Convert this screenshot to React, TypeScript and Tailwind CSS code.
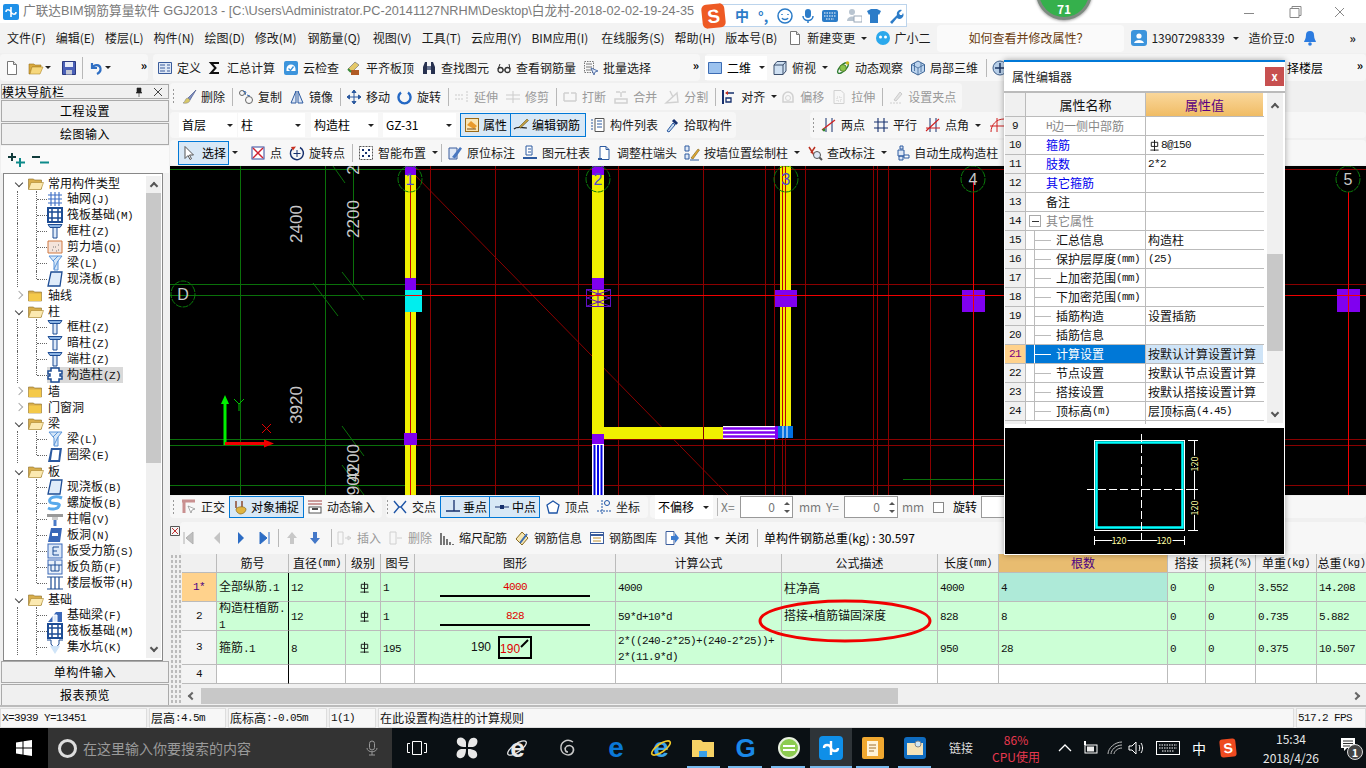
import type { ReactNode } from "react";

const icons: Record<string, ReactNode> = {
  doc: <><path d="M3.5 1.5h6l3 3v10h-9z" fill="#fff" stroke="#777" /><path d="M9.5 1.5v3h3" fill="#ddd" stroke="#777" /></>,
  open: <><path d="M1 4h5l1 1h6v2H4l-2 7H1z" fill="#d9a93d" stroke="#9a7420" strokeWidth=".6" /><path d="M4 7h11l-3 7H2z" fill="#f6d77c" stroke="#b48a2a" strokeWidth=".6" /></>,
  save: <><path d="M1.5 1.5h13v13h-13z" fill="#4a60b8" stroke="#2b3a80" /><path d="M4 2h8v5H4z" fill="#e8ecf8" /><path d="M5 10h6v4.5H5z" fill="#c4c8d4" /></>,
  undo: <path d="M4 3v5h5M4.5 8C6 4 12 4 12.5 8.500 12.800 11 11 13 9 14" fill="none" stroke="#2f6fc4" strokeWidth="2.200" />,
  def: <><path d="M1.500 2.500h13v11h-13z" fill="#dfe8f6" stroke="#3a5c9c" /><path d="M3 5h5M3 8h5M3 11h5M10 5h3M10 8h3M10 11h3" stroke="#3a5c9c" /></>,
  sigma: <path d="M12 3H4l4.500 5L4 13h8" fill="none" stroke="#111" strokeWidth="2" />,
  cloud: <><rect x="1" y="1" width="14" height="14" rx="2" fill="#3c94dc" /><path d="M3.500 9a4.500 4.500 0 1 1 9 0v2h-9z" fill="#fff" /><path d="M5.500 8.500l2 2 3-4" fill="none" stroke="#3c94dc" strokeWidth="1.300" /></>,
  level: <><path d="M2 9l7-7 4 3-7 7z" fill="#e4c868" stroke="#777" strokeWidth=".7" /><path d="M5 10h8v5H5z" fill="#b05a24" /><path d="M2 9l3 3" stroke="#3a8a3a" strokeWidth="2" /></>,
  binoc: <><path d="M2 14V7l2-5h2v12zM10 14V2h2l2 5v7z" fill="#27314f" /><path d="M6 6h4v4H6z" fill="#6b7692" /></>,
  glasses: <><circle cx="4.500" cy="10" r="2.500" fill="none" stroke="#333" strokeWidth="1.300" /><circle cx="11.500" cy="10" r="2.500" fill="none" stroke="#333" strokeWidth="1.300" /><path d="M7 10h2M2 9l2-5M14 9l-1-5" stroke="#333" /></>,
  batch: <><path d="M1.500 1.500h9v11h-9z" fill="none" stroke="#777" strokeDasharray="1.500 1" /><path d="M3 4h6M3 7h6M3 10h6" stroke="#777" /><path d="M8 8l7 3-3 1-1 3z" fill="#dfe8f6" stroke="#3a5c9c" strokeWidth=".8" /></>,
  view2d: <path d="M1.500 2.500h13v11h-13z" fill="#9cc2ee" stroke="#3c6cb4" />,
  top: <><path d="M2 5l3-3.500h9V11l-3 3.500H2z" fill="#cfe0f2" stroke="#3b4e6c" /><path d="M2 5h9v9.500M11 5l3-3.500" fill="none" stroke="#3b4e6c" /></>,
  orbit: <><ellipse cx="8" cy="8" rx="7" ry="3" transform="rotate(-45 8 8)" fill="none" stroke="#2e7d32" strokeWidth="1.400" /><circle cx="8" cy="8" r="3.400" fill="#8bc34a" stroke="#33691e" strokeWidth=".7" /><circle cx="12.500" cy="3" r="1.800" fill="#c8b820" /></>,
  cube: <><path d="M8 1l6.500 3.500v7L8 15l-6.500-3.500v-7z" fill="#bcd4ee" stroke="#3c6496" /><path d="M1.500 4.500L8 8l6.500-3.500M8 8v7M4.500 3v8M11 3v9" fill="none" stroke="#3c6496" strokeWidth=".8" /></>,
  pan: <><circle cx="8" cy="8" r="7" fill="#b8cfe8" stroke="#41608a" /><path d="M8 3v10M3 8h10" stroke="#1d3763" strokeWidth="1.500" /></>,
  brush: <><path d="M15 1L7 9l2 2z" fill="#8090c0" stroke="#3c4c84" strokeWidth=".6" /><path d="M7 9c-3 0-2 3-5 5 4 1 7-1 7-3z" fill="#d8c868" stroke="#888" strokeWidth=".6" /></>,
  copy: <><circle cx="4" cy="4" r="2.500" fill="none" stroke="#666" /><circle cx="11" cy="11" r="3.500" fill="none" stroke="#666" /><path d="M5 2l3 1-1 3M9 6l3 1" fill="none" stroke="#3a6cb0" /></>,
  mirror: <><path d="M7 2L2 14h5zM9 2l5 12H9z" fill="#dfe8f6" stroke="#2c5aa0" /></>,
  move: <path d="M8 1v14M1 8h14M8 1L6 3.500h4zM8 15l-2-2.500h4zM1 8l2.500-2v4zM15 8l-2.500-2v4z" fill="#2c5aa0" stroke="#2c5aa0" />,
  rotate: <path d="M4 3.500a6 6 0 1 0 7 0" fill="none" stroke="#2468c4" strokeWidth="2.400" />,
  extend: <path d="M1 6h9M1 10h9M13 2v12" fill="none" stroke="#b0b0b0" strokeDasharray="2 1" />,
  trim: <path d="M1 6h14M1 10h14M8 2v12" fill="none" stroke="#b0b0b0" />,
  brk: <path d="M2 4h5M9 4h5M2 12h12M2 4v8M14 4v8" fill="none" stroke="#b8b8b8" strokeWidth="1.500" />,
  merge: <path d="M3 3h4M9 3h4M2 10h12v4H2zM8 3v5" fill="none" stroke="#b8b8b8" strokeWidth="1.500" />,
  split: <path d="M2 14L13 4l1 9zM6 2l3 6" fill="none" stroke="#b8b8b8" strokeWidth="1.400" />,
  align: <><path d="M2 1v14" stroke="#16306e" strokeWidth="2" /><path d="M5 4h8M5 9h5v4H5z" fill="none" stroke="#16306e" strokeWidth="1.300" /><path d="M4 4l3-2v4z" fill="#c83020" /></>,
  offset: <><path d="M3 13V8a5 5 0 0 1 10 0v5z" fill="none" stroke="#b8b8b8" strokeWidth="1.500" /><circle cx="8" cy="9" r="2.500" fill="none" stroke="#c0c0c0" /></>,
  stretch: <><path d="M3 1.500h7l3 3v10H3z" fill="none" stroke="#b8b8b8" /><path d="M6 8h4v4H6z" fill="none" stroke="#b8b8b8" strokeDasharray="1 1" /></>,
  handle: <><path d="M2 14h11" stroke="#b8b8b8" strokeDasharray="2 1" /><path d="M6 11l6-8 2 2-6 7z" fill="#d8d8d8" stroke="#b0b0b0" /></>,
  prop: <><rect x="1.500" y="1.500" width="13" height="13" fill="#fbe6b4" stroke="#9a6a18" /><path d="M3 8l4-4 6 5-3 3z" fill="#e99a2c" /><path d="M3 12h9" stroke="#7a4a10" /></>,
  edit: <><path d="M1 12c3-3 8-1 13-1" fill="none" stroke="#222" strokeWidth="1.200" /><path d="M6 10l8-8 1.500 1.500-8 7.500z" fill="#c4a040" stroke="#665520" strokeWidth=".6" /></>,
  list: <><path d="M5 1.500h9v13H5z" fill="#fff" stroke="#555" /><path d="M1 3h2M1 6h2M1 9h2M1 12h2M7 4h5M7 7h5M7 10h5" stroke="#2c5aa0" /></>,
  pick: <><path d="M3 14L9 6l2 2-6 7z" fill="#c8dcf0" stroke="#2c5aa0" /><path d="M9 3l4 4" stroke="#16306e" strokeWidth="3" /></>,
  two: <><path d="M5 1v14M11 1v14" stroke="#16306e" /><path d="M1 13L14 3" stroke="#d02020" strokeWidth="1.300" /><circle cx="3" cy="13" r="1.400" fill="#2e8b2e" /></>,
  par: <path d="M1 5h14M1 11h14M5 1v14M11 1v14" stroke="#16306e" strokeWidth="1.100" />,
  ang: <><path d="M5 1v14M11 1v14" stroke="#16306e" /><path d="M1 14L14 2M1 11h14" stroke="#d02020" strokeWidth="1.100" /></>,
  arc: <><path d="M2 15C2 8 7 2 15 2M1 9h14M8 1v14" fill="none" stroke="#d02020" /></>,
  arrow: <path d="M4 1.500v12l3-3 2 4 1.500-.8-2-3.700h4z" fill="#fff" stroke="#555" />,
  pt: <><rect x="2" y="2" width="12" height="12" fill="#fff" stroke="#34489c" /><path d="M3 3l10 10M13 3L3 13" stroke="#d02030" strokeWidth="1.400" /></>,
  rotpt: <><path d="M11 2.500a6.500 6.500 0 1 1-8 1.500" fill="none" stroke="#16306e" strokeWidth="1.500" /><path d="M8 5v7M4.500 8.500h7" stroke="#16306e" /><path d="M2 2l5-.5-3 4z" fill="#c83020" /></>,
  smart: <><rect x="1.500" y="1.500" width="13" height="13" fill="#fff" stroke="#555" strokeDasharray="2 1" /><path d="M4 4h2v2H4zM10 4h2v2h-2zM4 10h2v2H4zM10 10h2v2h-2zM7 7h2v2H7z" fill="#16306e" /></>,
  orig: <><path d="M2 3h8v11H2z" fill="#dfe8f6" stroke="#3a5c9c" /><path d="M5 12l8-10 2 1.500-7 10z" fill="#4a78c0" /></>,
  table: <><path d="M4 1h6v9H4z" fill="#fff" stroke="#2c5aa0" /><path d="M1 12h14v2H1z" fill="#2c5aa0" /><path d="M6 4h3M6 7h3" stroke="#2c5aa0" /></>,
  adj: <><path d="M3 1.500h6l3 3v10H3z" fill="#fff" stroke="#2c5aa0" /><path d="M9 1.500v3h3" fill="none" stroke="#2c5aa0" /><path d="M1 14h4" stroke="#2c5aa0" strokeWidth="2" /></>,
  draw: <><path d="M1 1h4v5H1zM1 9h4v5H1z" fill="#dfe8f6" stroke="#2c5aa0" /><path d="M7 13l7-9 1.500 1L9 14z" fill="#e0a830" stroke="#776020" strokeWidth=".6" /><path d="M6 15h9" stroke="#2c5aa0" /></>,
  check: <><path d="M2 2l5 8M8 2L4 8" stroke="#bb3020" strokeWidth="1.500" /><circle cx="10" cy="10" r="3.500" fill="#dfe8f6" stroke="#555" /><path d="M12.500 12.500L15 15" stroke="#555" strokeWidth="2" /></>,
  auto: <><path d="M6 1h3v3H6zM4 5h6v6H4zM5 11h4v4H5z" fill="#dfe8f6" stroke="#2c5aa0" /><path d="M10 10h5v3h-5z" fill="#fff" stroke="#2c5aa0" /></>,
  ortho: <><path d="M1 2h13M3 2v12" stroke="#c99090" strokeWidth="3" /><path d="M7 7l7 3-3 1-1 3z" fill="#fff" stroke="#888" strokeWidth=".7" /></>,
  snap: <><path d="M3 2v7M9 2v7" stroke="#8a4a30" strokeWidth="1.500" /><path d="M3 10c2-3 9-3 10 0 0 3-3 5-6 5-3-1-4-3-4-5z" fill="#e0b440" stroke="#8a6a20" strokeWidth=".7" /></>,
  dyn: <><path d="M1 2h14M1 5h14" stroke="#a04040" /><rect x="2" y="8" width="12" height="6" fill="#fff" stroke="#555" /><path d="M5 10h6" stroke="#111" strokeWidth="1.500" /></>,
  cross: <path d="M2 2l5 6-5 6M14 2L9 8l5 6M7 8h2" fill="none" stroke="#1d54a6" strokeWidth="1.400" />,
  perp: <path d="M1 12h14M9 1v11" stroke="#16306e" strokeWidth="1.300" />,
  mid: <><path d="M1 8h14" stroke="#16306e" /><rect x="6" y="6" width="4" height="4" fill="#16306e" /></>,
  apex: <path d="M8 2l6 4-2 8H4L2 6z" fill="#fff" stroke="#1d54a6" strokeWidth="1.300" />,
  coord: <><path d="M6 1v14M1 12h14" stroke="#1d54a6" strokeDasharray="2 1" /><circle cx="11" cy="4" r="2.500" fill="none" stroke="#1d54a6" /></>,
  first: <path d="M4 2v12M13 2L6 8l7 6z" fill="#c0c0c0" stroke="#b0b0b0" />,
  prev: <path d="M11 2L5 8l6 6z" fill="#c4c4c4" />,
  next: <path d="M5 2l6 6-6 6z" fill="#2c6cc4" />,
  last: <path d="M12 2v12M3 2l7 6-7 6z" fill="#2c6cc4" stroke="#2c6cc4" />,
  up: <path d="M8 2l5 6h-3v6H6V8H3z" fill="#c8c8c8" />,
  down: <path d="M8 14l5-6h-3V2H6v6H3z" fill="#4478c8" />,
  ins: <path d="M1 2h5v12H1zM8 8h6M14 8l-3-2v4z" fill="none" stroke="#b8b8b8" />,
  del: <path d="M2 2h6v12H2zM9 8h5" fill="none" stroke="#b8b8b8" />,
  ruler: <path d="M2 15V3M5 15V6M8 15V9M11 15v-3M14 15v-1" stroke="#333" strokeWidth="1.300" />,
  info: <><path d="M2 9l6-7 6 6-6 7z" fill="#f6e6b0" stroke="#8a6a20" /><path d="M6 13l7-9" stroke="#3c6cb0" strokeWidth="2" /></>,
  lib: <><rect x="1.500" y="2.500" width="13" height="11" fill="#fff" stroke="#3a5c9c" /><path d="M2 5h12" stroke="#3a5c9c" strokeWidth="2" /><path d="M4 8h8M4 11h8" stroke="#c09030" /></>,
  other: <><path d="M2 1.500h8v13H2z" fill="#fff" stroke="#3a5c9c" /><path d="M7 6h4V3l4 5-4 5v-3H7z" fill="#3c7cd0" /></>,
  axis: <path d="M1 4h14M1 8h14M1 12h14M4 1v14M8 1v14M12 1v14" stroke="#3a6cc4" strokeWidth="1.100" />,
  raft: <><path d="M1 1h14v14H1z" fill="#fff" stroke="#1d4c94" strokeWidth="2" /><path d="M5 2v12M11 2v12M2 5h12M2 11h12" stroke="#1d4c94" strokeWidth="1.500" /></>,
  col: <><path d="M1 1.500h14l-2 3H3z" fill="#8cb4e4" stroke="#1d4c94" /><path d="M6 4.500h4V15H6z" fill="#dce8f8" stroke="#1d4c94" /></>,
  wall: <><path d="M1 2h14v12H1z" fill="#f4e4dc" stroke="#d07840" /><path d="M5 11h1M8 8h1M11 11h1M9 12h1M6 8h1M11 6h1" stroke="#777" /></>,
  beam: <><path d="M2 1h13l-4 5v9H7V7z" fill="#d4e6f8" stroke="#5a94d8" /><path d="M6 6l5-5M11 6L7 14" stroke="#5a94d8" /></>,
  slab: <path d="M4 1h11l-2 14H1z" fill="#e0ecfa" stroke="#1d4c94" strokeWidth="1.300" />,
  gzz: <path d="M4 1h8v3h3v3h-2v2h2v3h-3v3H4v-3H1V9h2V7H1V4h3z" fill="#fff" stroke="#1d4c94" strokeWidth="1.500" />,
  ring: <><path d="M4 1h11l-2 14H1z" fill="#2c5aa0" /><path d="M5.500 3h7l-1.200 10H4z" fill="#fff" /></>,
  spiral: <path d="M15 3C8 0 1 3 3 7c2 3 11 0 9 4-1 3-7 4-11 2" fill="none" stroke="#5aaaec" strokeWidth="3" />,
  cap: <><path d="M0 3h16v3H0z" fill="#999" /><path d="M5 6h6v3H5z" fill="#ccc" /><path d="M6.500 9h3v6h-3z" fill="#4a7ac8" /></>,
  hole: <><path d="M4 1h11l-2 14H1z" fill="#3a68b8" /><rect x="5" y="6" width="6" height="3" fill="#fff" /></>,
  sbar: <><rect x="1" y="1" width="14" height="14" fill="#dce8f8" stroke="#3a68b8" /><path d="M12 4H6v8h6M6 8h4" fill="none" stroke="#1d4c94" /></>,
  nbar: <><rect x="1" y="1" width="14" height="14" fill="#eaf1fa" stroke="#3a68b8" /><path d="M1 6h14M4 6v6h8V6M8 2v10" fill="none" stroke="#1d4c94" /></>,
  band: <path d="M0 2h16M0 14h16M4 2v12M8 2v12M12 2v12" stroke="#1d4c94" strokeWidth="1.200" />,
  fbeam: <><path d="M1 15L9 5h6v10z" fill="#3a68b8" /><path d="M6 8h4v7H6z" fill="#dce8f8" stroke="#fff" /></>,
  pit: <><path d="M0 1h4v4l4 5 4-5V1h4" fill="none" stroke="#1d4c94" /><path d="M3 7h10l-5 8z" fill="#cfe4f8" /></>,
};

function I({ n, gray }: { n: string; gray?: boolean }) {
  return (
    <svg viewBox="0 0 16 16" className={gray ? "w-4 h-4 shrink-0 opacity-60" : "w-4 h-4 shrink-0"} aria-hidden="true">
      {icons[n]}
    </svg>
  );
}

// SimSun-like text: ascii runs go mono at half the CJK width
function Sim({ t }: { t: string }) {
  return (
    <>
      {t.split(/([\x00-\x7f]+)/).map((s, i) =>
        !s ? null : /^[\x00-\x7f]/.test(s) ? (
          <span key={i} className="font-['Liberation_Mono',monospace] text-[11px] tracking-[-0.6px]">{s}</span>
        ) : (
          <span key={i}>{s}</span>
        )
      )}
    </>
  );
}

function Caret({ className = "" }: { className?: string }) {
  return <span className={`inline-block w-0 h-0 border-x-[3px] border-x-transparent border-t-[3px] border-t-[#222] ${className}`} />;
}

function Sep() {
  return <span className="w-px h-[18px] bg-[#b8b8b8] mr-[5px] shrink-0" />;
}

function Grip() {
  return <span className="w-[3px] h-[17px] mr-[3px] shrink-0 bg-[radial-gradient(#999_1px,transparent_1px)] bg-[length:3px_4px]" />;
}

function Tool({ n, t, gray, caret, gapCls = "mr-[7px]" }: { n: string; t: string; gray?: boolean; caret?: boolean; gapCls?: string }) {
  return (
    <span className={`flex items-center gap-[4px] shrink-0 ${gapCls} ${gray ? "text-[#9a9a9a]" : "text-[#1a1a1a]"}`}>
      <I n={n} gray={gray} />
      <span className="leading-none">{t}</span>
      {caret && <Caret className="ml-[2px]" />}
    </span>
  );
}

function Group({ children, className = "" }: { children: ReactNode; className?: string }) {
  return <div className={`flex items-center h-full bg-[#f7f7f7] rounded-sm shrink-0 ${className}`}>{children}</div>;
}

const menus: [string, string][] = [
  ["文件(F)", "mr-[10px]"], ["编辑(E)", "mr-[10px]"], ["楼层(L)", "mr-[10px]"], ["构件(N)", "mr-[10px]"], ["绘图(D)", "mr-[10px]"], ["修改(M)", "mr-[11px]"], ["钢筋量(Q)", "mr-[12px]"],
  ["视图(V)", "mr-[10px]"], ["工具(T)", "mr-[10px]"], ["云应用(Y)", "mr-[10px]"], ["BIM应用(I)", "mr-[13px]"], ["在线服务(S)", "mr-[10px]"], ["帮助(H)", "mr-[10px]"], ["版本号(B)", "mr-[10px]"],
];

function TitleBar() {
  return (
    <div className="h-[23px] bg-white flex items-center shrink-0 relative">
      <svg viewBox="0 0 16 16" className="w-4 h-4 ml-[3px] mr-[4px]"><rect width="16" height="16" rx="2" fill="#1e90e8" /><path d="M8 3v10M3 8c0-3 4-3 5 0s5 3 5 0" fill="none" stroke="#fff" strokeWidth="1.600" /></svg>
      <span className="text-[12.7px] text-[#7a7a7a] whitespace-nowrap font-['Liberation_Sans','Noto_Sans_CJK_SC',sans-serif]">{"广联达BIM钢筋算量软件 GGJ2013 - [C:\\Users\\Administrator.PC-20141127NRHM\\Desktop\\白龙村-2018-02-02-19-24-35"}</span>
      <svg viewBox="0 0 100 14" className="w-[100px] h-[14px] absolute left-[1244px] top-[5px]" fill="none" stroke="#888">
        <path d="M0 8.500h10" />
        <path d="M46 3.500h9v9h-9zM48 3.500v-2h9v9h-2" />
        <path d="M91 2l10 10M101 2L91 12" />
      </svg>
    </div>
  );
}

function MenuBar() {
  return (
    <div className="h-[30px] bg-[#f3f3f3] flex items-center text-[12px] text-[#1a1a1a] shrink-0 pl-[7px]">
      {menus.map(([m, gap]) => <span key={m} className={`whitespace-nowrap ${gap}`}>{m}</span>)}
      <Tool n="doc" t="新建变更" caret gapCls="mr-[6px]" />
      <svg viewBox="0 0 16 16" className="w-4 h-4 mr-[3px] ml-[2px]"><circle cx="8" cy="8" r="7" fill="#2aa8ec" /><circle cx="5.500" cy="7" r="1.500" fill="#fff" /><circle cx="10.500" cy="7" r="1.500" fill="#fff" /></svg>
      <span>广小二</span>
      <div className="w-[187px] h-[27px] bg-[#fafafa] rounded-sm ml-[7px] flex items-center justify-center text-[#6b3d10]"><span className="ml-[-5px]">如何查看并修改属性？</span></div>
      <svg viewBox="0 0 16 16" className="w-4 h-4 ml-[7px] mr-[4px]"><rect width="16" height="16" rx="3" fill="#3c94dc" /><circle cx="8" cy="6" r="2.600" fill="#fff" /><path d="M3 13c1-4 9-4 10 0z" fill="#fff" /></svg>
      <span className="text-[#1a1a1a] mr-[6px] w-[76px]">13907298339</span>
      <Caret className="mr-[9px]" />
      <span className="w-[46px]">造价豆:0</span>
      <svg viewBox="0 0 16 16" className="w-4 h-4 ml-[8px]"><path d="M8 1a4 4 0 0 1 4 4c0 4 2 6 2 7H2c0-1 2-3 2-7a4 4 0 0 1 4-4z" fill="#2c7ce0" /><circle cx="8" cy="14" r="1.800" fill="#2c7ce0" /></svg>
      <span className="ml-[31px] text-[#222] font-bold leading-none">»</span>
    </div>
  );
}

function Row1() {
  return (
    <div className="h-[30px] bg-[#f0f0f0] flex items-center text-[12px] gap-[5px] pt-[1px] pb-[2px] shrink-0">
      <Group className="w-[148px] pl-[4px]">
        <I n="doc" /><span className="ml-[8px]" /><I n="open" /><Caret className="ml-[1px] mr-[10px]" /><I n="save" />
        <span className="w-px h-[22px] bg-[#b8b8b8] mx-[5px]" />
        <I n="undo" /><Caret className="ml-[1px]" />
        <span className="ml-auto mr-[1px] font-bold leading-none mb-[6px]">»</span>
      </Group>
      <Group className="w-[547px] pl-[4px]">
        <Tool n="def" t="定义" gapCls="mr-[6px]" />
        <Tool n="sigma" t="汇总计算" gapCls="mr-[8px]" />
        <Tool n="cloud" t="云检查" />
        <Tool n="level" t="平齐板顶" />
        <Tool n="binoc" t="查找图元" />
        <Tool n="glasses" t="查看钢筋量" />
        <Tool n="batch" t="批量选择" />
        <span className="ml-auto mr-[1px] font-bold leading-none mb-[6px]">»</span>
      </Group>
      <Group className="grow">
        <span className="flex items-center gap-[3px] bg-white h-[24px] w-[62px] pl-[2px]"><I n="view2d" /><span className="ml-[1px]">二维</span></span>
        <Caret className="ml-[-8px] mr-[7px]" />
        <Tool n="top" t="俯视" caret />
        <Tool n="orbit" t="动态观察" />
        <Tool n="cube" t="局部三维" gapCls="mr-[8px]" />
        <Sep />
        <I n="pan" />
        <span className="ml-[279px]">择楼层</span>
        <span className="ml-auto mr-[3px] font-bold leading-none mb-[6px]">»</span>
      </Group>
    </div>
  );
}

function Combo({ t, w }: { t: string; w: string }) {
  return (
    <span className={`flex items-center justify-between bg-white h-[24px] px-[3px] shrink-0 ${w}`}>
      <span>{t}</span><Caret className="mr-[1px]" />
    </span>
  );
}

function Row2() {
  return (
    <div className="h-[28px] bg-[#f0f0f0] flex items-center text-[12px] pb-[1px] shrink-0">
      <Group className="pl-[2px] w-[792px]">
        <Grip />
        <span className="ml-[3px]" />
        <Tool n="brush" t="删除" /><Sep />
        <Tool n="copy" t="复制" /><Tool n="mirror" t="镜像" /><Sep />
        <Tool n="move" t="移动" /><Tool n="rotate" t="旋转" /><Sep />
        <Tool n="extend" t="延伸" gray /><Tool n="trim" t="修剪" gray /><Sep />
        <Tool n="brk" t="打断" gray /><Tool n="merge" t="合并" gray /><Tool n="split" t="分割" gray /><Sep />
        <Tool n="align" t="对齐" caret gapCls="mr-[3px]" /><Tool n="offset" t="偏移" gray /><Tool n="stretch" t="拉伸" gray /><Sep />
        <Tool n="handle" t="设置夹点" gray />
      </Group>
    </div>
  );
}

function Row3() {
  return (
    <div className="h-[28px] bg-[#f0f0f0] flex items-center text-[12px] shrink-0 py-[1px]">
      <Group className="w-[566px] pl-[9px]">
        <Combo t="首层" w="w-[58px] mr-[1px]" />
        <Combo t="柱" w="w-[67px] mr-[6px]" />
        <Combo t="构造柱" w="w-[67px] mr-[5px]" />
        <Combo t="GZ-31" w="w-[73px] mr-[4px]" />
        <span className="flex items-center gap-[3px] w-[51px] h-[24px] pl-[3px] bg-[#d8e8f6] border border-[#0078d7]"><I n="prop" />属性</span>
        <span className="flex items-center gap-[3px] w-[75px] h-[24px] pl-[2px] bg-[#d8e8f6] border border-[#0078d7] border-l-0 mr-[4px]"><I n="edit" />编辑钢筋</span>
        <Tool n="list" t="构件列表" gapCls="mr-[6px]" />
        <Tool n="pick" t="拾取构件" gapCls="mr-0" />
      </Group>
      <Group className="ml-[74px] pl-[2px] grow">
        <Grip />
        <span className="ml-[3px]" />
        <Tool n="two" t="两点" gapCls="mr-[8px]" />
        <Tool n="par" t="平行" gapCls="mr-[8px]" />
        <Tool n="ang" t="点角" caret gapCls="mr-[8px]" />
        <I n="arc" />
      </Group>
    </div>
  );
}

function Row4() {
  return (
    <div className="h-[27px] bg-[#f0f0f0] flex items-center text-[12px] shrink-0 py-[1px]">
      <Group className="grow pl-[8px]">
        <span className="flex items-center gap-[3px] w-[51px] h-[24px] pl-[2px] bg-[#d8e8f6] border border-[#0078d7]"><I n="arrow" /><span className="ml-[2px]">选择</span></span>
        <Caret className="ml-[3px] mr-[12px]" />
        <Tool n="pt" t="点" />
        <Tool n="rotpt" t="旋转点" /><Sep />
        <Tool n="smart" t="智能布置" caret gapCls="mr-[3px]" /><Sep />
        <Tool n="orig" t="原位标注" />
        <Tool n="table" t="图元柱表" />
        <Tool n="adj" t="调整柱端头" />
        <Tool n="draw" t="按墙位置绘制柱" caret />
        <Tool n="check" t="查改标注" caret />
        <Tool n="auto" t="自动生成构造柱" />
      </Group>
    </div>
  );
}

const tree: [number, string, string, boolean?][] = [
  [0, "open", "常用构件类型"], [1, "axis", "轴网(J)"], [1, "raft", "筏板基础(M)"], [1, "col", "框柱(Z)"], [1, "wall", "剪力墙(Q)"], [1, "beam", "梁(L)"], [1, "slab", "现浇板(B)", true],
  [0, "closed", "轴线"], [0, "open", "柱"], [1, "col", "框柱(Z)"], [1, "col", "暗柱(Z)"], [1, "col", "端柱(Z)"], [2, "gzz", "构造柱(Z)", true],
  [0, "closed", "墙"], [0, "closed", "门窗洞"], [0, "open", "梁"], [1, "beam", "梁(L)"], [1, "ring", "圈梁(E)", true],
  [0, "open", "板"], [1, "slab", "现浇板(B)"], [1, "spiral", "螺旋板(B)"], [1, "cap", "柱帽(V)"], [1, "hole", "板洞(N)"], [1, "sbar", "板受力筋(S)"], [1, "nbar", "板负筋(F)"], [1, "band", "楼层板带(H)", true],
  [0, "open", "基础"], [1, "fbeam", "基础梁(F)"], [1, "raft", "筏板基础(M)"], [1, "pit", "集水坑(K)"],
];

function Folder({ open }: { open: boolean }) {
  return (
    <svg viewBox="0 0 16 13" className="w-4 h-[13px] shrink-0" aria-hidden="true">
      <path d="M0.500 2h5l1 1h7v9h-13z" fill="#d8ae4c" stroke="#8a6c28" strokeWidth=".6" />
      {open ? <path d="M3 5.500h12.500L13 12.500H.500z" fill="#fbe9b0" stroke="#a8842c" strokeWidth=".6" /> : <path d="M.8 4.500h12.400v7.500H.8z" fill="#f4c94a" />}
    </svg>
  );
}

function TreeRow({ row }: { row: [number, string, string, boolean?] }) {
  const [lvl, icon, label, last] = row;
  if (lvl === 0) {
    const open = icon === "open";
    return (
      <div className="h-4 flex items-center relative">
        <span className={`absolute left-[12px] top-[5px] w-[6px] h-[6px] border-r border-b ${open ? "rotate-45 border-[#444] top-[3px]" : "-rotate-45 border-[#aaa]"}`} />
        <span className="ml-[24px] mr-[4px]"><Folder open={open} /></span>
        <Sim t={label} />
      </div>
    );
  }
  return (
    <div className="h-4 flex items-center relative">
      <span className="absolute left-[13px] top-0 h-full border-l border-dotted border-[#666]" />
      <span className={`absolute left-[32px] top-0 border-l border-dotted border-[#666] ${last ? "h-[8px]" : "h-full"}`} />
      <span className="absolute left-[33px] top-[8px] w-[10px] border-t border-dotted border-[#666]" />
      <span className={`ml-[43px] flex items-center h-full ${lvl === 2 ? "bg-[#d9d9d9] pr-[2px]" : ""}`}>
        <I n={icon} /><span className="ml-[4px] whitespace-nowrap"><Sim t={label} /></span>
      </span>
    </div>
  );
}

function NavButton({ t }: { t: string }) {
  return <div className="h-[22px] mb-px mx-[1px] bg-[#f0f0f0] border border-[#aaa] flex items-center justify-center text-[12px] tracking-[0.5px] shrink-0">{t}</div>;
}

function LeftPanel() {
  return (
    <aside className="w-[170px] bg-[#f0f0f0] flex flex-col shrink-0 pt-px">
      <div className="h-[15px] mx-[1px] mb-[1px] border border-[#aaa] flex items-center text-[12px] leading-none pr-[6px] shrink-0">
        <span className="grow tracking-[0.5px]">模块导航栏</span>
        <svg viewBox="0 0 10 10" className="w-[10px] h-[10px] mr-[10px]"><path d="M3 1h4v4l1 1H2l1-1zM5 6v4" fill="#222" stroke="#222" strokeWidth=".6" /></svg>
        <svg viewBox="0 0 8 8" className="w-2 h-2"><path d="M0 0l8 8M8 0L0 8" stroke="#444" /></svg>
      </div>
      <NavButton t="工程设置" />
      <NavButton t="绘图输入" />
      <div className="h-[27px] mx-[1px] bg-[#fafafa] flex items-center pl-[7px] gap-[7px] shrink-0">
        <svg viewBox="0 0 17 14" className="w-[17px] h-[14px]"><path d="M4 0v8M0 4h8" stroke="#123c3c" strokeWidth="2" /><path d="M12 5v9M8 9.500h9" stroke="#0d8a8a" strokeWidth="2" /></svg>
        <svg viewBox="0 0 17 14" className="w-[17px] h-[14px]"><path d="M0 4h8" stroke="#123c3c" strokeWidth="2" /><path d="M8 9.500h9" stroke="#0d8a8a" strokeWidth="2" /></svg>
      </div>
      <div className="h-[488px] ml-[3px] mr-[7px] border border-[#888] flex bg-white overflow-hidden shrink-0 text-[12px] text-[#111]">
        <div className="grow min-w-0 overflow-hidden pt-[1px]">
          {tree.map((r, i) => <TreeRow key={i} row={r} />)}
        </div>
        <div className="w-[15px] bg-[#f0f0f0] flex flex-col items-center shrink-0 my-[2px] mr-[1px]">
          <span className="h-[17px] flex items-center"><span className="w-[6px] h-[6px] border-l-2 border-t-2 border-[#555] rotate-45 mt-[3px]" /></span>
          <span className="w-full h-[270px] bg-[#c8c8c8]" />
          <span className="mt-auto h-[17px] flex items-center"><span className="w-[6px] h-[6px] border-r-2 border-b-2 border-[#555] rotate-45 mb-[3px]" /></span>
        </div>
      </div>
      <div className="grow" />
      <NavButton t="单构件输入" />
      <NavButton t="报表预览" />
    </aside>
  );
}

function Bubble({ x, y, t, fill }: { x: number; y: number; t: string; fill: string }) {
  return (
    <g>
      <ellipse cx={x} cy={y} rx="12" ry="13" fill="none" stroke="#0a7a0a" strokeDasharray="6 1" />
      <text x={x} y={y + 6} textAnchor="middle" fontSize="16" fill={fill} className="font-['Liberation_Sans',sans-serif]">{t}</text>
    </g>
  );
}

function Dim({ x, y, t }: { x: number; y: number; t: string }) {
  return <text transform={`translate(${x} ${y}) rotate(-90)`} textAnchor="middle" fontSize="17" fill="#c8c8c8" className="font-['Liberation_Sans',sans-serif]">{t}</text>;
}

function Canvas() {
  const dark = [430.500, 495.500, 578.500, 618.500, 703.500, 765.500, 774.500, 782.500, 785.500, 805.500, 873.500, 877.500, 888.500, 930.500];
  const hLines = [169.500, 284.500, 439.500, 445.500, 485.500];
  return (
    <svg viewBox="170 166 1196 329" className="w-full h-[329px] bg-black shrink-0 block">
      {dark.map((x) => <path key={x} d={`M${x} 166v329`} stroke="#8a0000" />)}
      {hLines.map((y) => <path key={y} d={`M406 ${y}H1366`} stroke="#8a0000" />)}
      <path d="M410 170L728 495" stroke="#8a0000" />
      {[240.500, 325.500].map((x) => <path key={x} d={`M${x} 166v329`} stroke="#0a700a" />)}
      <path d="M353.500 166v118" stroke="#0a700a" />
      {[169.500, 284.500, 295.500, 439.500, 445.500, 485.500].map((y) => <path key={y} d={`M170 ${y}H406`} stroke="#0a700a" />)}
      <path d="M903 479.500H1010" stroke="#0a700a" />
      <path d="M342 272l22 28M313 283l25 33M342 426l22 30M342 465l22 30M333 166l12 17" stroke="#0a700a" />

      {/* walls */}
      <rect x="405" y="166" width="11" height="329" fill="#f0f000" />
      <rect x="592" y="166" width="12" height="272" fill="#f0f000" />
      <rect x="780" y="166" width="11" height="271" fill="#f0f000" />
      <rect x="604" y="427" width="119" height="12" fill="#f0f000" />
      <path d="M703.500 427v12" stroke="#800000" />
      <path d="M410.500 166v329M782.500 166v271M785.500 166v271" stroke="#c00000" />
      <rect x="723" y="426" width="52" height="13" fill="#fff" />
      <path d="M723 428.500h52M723 432.500h52M723 436.500h52" stroke="#8000f0" strokeWidth="2.500" />
      <rect x="775" y="426" width="3" height="13" fill="#8000f0" />
      <rect x="778" y="426" width="15" height="12" fill="#0070e0" />
      <path d="M783 426v12M787 426v12" stroke="#fff" />
      <rect x="592" y="445" width="12" height="50" fill="#fff" />
      <path d="M594.500 445v50M598 445v50M601.500 445v50" stroke="#0000e0" strokeWidth="2" />

      {/* columns */}
      <rect x="405" y="166" width="11" height="9" fill="#8000f0" />
      <rect x="592" y="166" width="12" height="9" fill="#8000f0" />
      <rect x="405" y="278" width="11" height="12" fill="#8000f0" />
      <rect x="592" y="278" width="12" height="12" fill="#8000f0" />
      <rect x="405" y="290" width="17" height="22" fill="#00eeee" />
      <rect x="586.500" y="289.500" width="24" height="17" fill="none" stroke="#6010c0" />
      <path d="M587 290l23 8M610 290l-23 8M587 298l23 8M610 298l-23 8M598 290v16" stroke="#6010c0" />
      <rect x="775" y="290" width="22" height="17" fill="#8000f0" />
      <rect x="962" y="290" width="23" height="22" fill="#8000f0" />
      <rect x="1337" y="289" width="23" height="23" fill="#8000f0" />
      <rect x="404" y="433" width="13" height="12" fill="#8000f0" />
      <rect x="592" y="434" width="12" height="10" fill="#8000f0" />
      <path d="M592 444.500h12" stroke="#fff" />

      {/* main axis lines */}
      <path d="M170 295.500H406" stroke="#0a700a" />
      <path d="M406 295.500H1366M973.500 181v314M1348.500 192v303" stroke="#f00000" />
      <path d="M410.500 445v50" stroke="#e00000" />

      <Bubble x={410} y={179} t="1" fill="#4a4ad0" />
      <Bubble x={598} y={179} t="2" fill="#4a4ad0" />
      <Bubble x={786} y={179} t="3" fill="#4a4ad0" />
      <Bubble x={973} y={179} t="4" fill="#c8c8c8" />
      <Bubble x={1348} y={179} t="5" fill="#c8c8c8" />
      <Bubble x={183} y={294} t="D" fill="#c8c8c8" />

      <Dim x={302} y={224} t="2400" />
      <Dim x={359} y={219} t="2200" />
      <Dim x={359} y={170} t="2" />
      <Dim x={302} y={405} t="3920" />
      <Dim x={359} y={463} t="4200" />
      <Dim x={359} y={481} t="900" />

      {/* ucs */}
      <path d="M225 445V402" stroke="#00f000" strokeWidth="3" />
      <path d="M225 395l-4 9h8z" fill="#00f000" />
      <path d="M225 443.500H264" stroke="#f00000" strokeWidth="3" />
      <path d="M274 443.500l-10-4v8z" fill="#f00000" />
      <path d="M234 399l5 5 5-5M239 404v7" fill="none" stroke="#00c000" />
      <path d="M262 424l9 9M271 424l-9 9" stroke="#e00000" />
    </svg>
  );
}

function Spin({ w }: { w: string }) {
  return (
    <span className={`h-[22px] border border-[#999] bg-white flex items-center justify-end shrink-0 ${w}`}>
      <span className="text-[#777] mr-[9px]">0</span>
      <span className="flex flex-col gap-[5px] mr-[2px]">
        <span className="w-0 h-0 border-x-[3px] border-x-transparent border-b-[3px] border-b-[#555]" />
        <span className="w-0 h-0 border-x-[3px] border-x-transparent border-t-[3px] border-t-[#555]" />
      </span>
    </span>
  );
}

function SnapBar() {
  return (
    <div className="h-[27px] bg-[#f0f0f0] flex items-center text-[12px] shrink-0 py-[1px] pb-[4px]">
      <Group className="pl-[2px] w-[212px]">
        <Grip />
        <Tool n="ortho" t="正交" gapCls="mr-[4px] ml-[3px]" />
        <span className="flex items-center gap-[2px] w-[75px] h-[22px] pl-[3px] border border-[#0078d7] bg-[#d8e8f6] mr-[3px]"><I n="snap" />对象捕捉</span>
        <Tool n="dyn" t="动态输入" gapCls="mr-0" />
      </Group>
      <Group className="ml-[4px] w-[262px]">
        <Grip />
        <Tool n="cross" t="交点" gapCls="mr-[4px]" />
        <span className="flex items-center gap-[2px] w-[50px] h-[22px] pl-[4px] border border-[#0078d7] bg-[#d8e8f6]"><I n="perp" />垂点</span>
        <span className="flex items-center gap-[2px] w-[50px] h-[22px] pl-[4px] border border-[#0078d7] border-l-0 bg-[#d8e8f6] mr-[5px]"><I n="mid" />中点</span>
        <Tool n="apex" t="顶点" />
        <Tool n="coord" t="坐标" gapCls="mr-0" />
      </Group>
      <Group className="ml-[2px] pl-[5px] grow">
        <Combo t="不偏移" w="w-[58px] mr-[4px]" />
        <span className="w-px h-[18px] bg-[#b8b8b8] mr-[3px]" />
        <span className="text-[#777] w-[19px]">X=</span>
        <Spin w="w-[53px]" />
        <span className="text-[#777] ml-[6px] w-[27px]">mm</span>
        <span className="text-[#777] w-[18px]">Y=</span>
        <Spin w="w-[54px]" />
        <span className="text-[#777] ml-[4px] w-[31px]">mm</span>
        <span className="w-[11px] h-[11px] border border-[#888] bg-white mr-[9px]" />
        <span className="mr-[4px]">旋转</span>
        <Spin w="w-[60px]" />
      </Group>
    </div>
  );
}

function SteelBar() {
  return (
    <div className="h-[32px] bg-[#f0f0f0] flex items-center text-[12px] shrink-0">
      <svg viewBox="0 0 10 10" className="w-[10px] h-[10px] self-start mt-[4px] shrink-0"><path d="M.5.500h9v9h-9z" fill="#f4f4f4" stroke="#555" /><path d="M2 2l6 6M8 2L2 8" stroke="#c03030" /></svg>
      <Group className="grow bg-[#f0f0f0]">
        <I n="first" /><span className="ml-[13px]" /><I n="prev" /><span className="ml-[8px]" /><I n="next" /><span className="ml-[8px]" /><I n="last" />
        <span className="w-px h-[18px] bg-[#b8b8b8] mx-[5px]" />
        <I n="up" /><span className="ml-[7px]" /><I n="down" />
        <span className="w-px h-[18px] bg-[#b8b8b8] ml-[8px] mr-[5px]" />
        <Tool n="ins" t="插入" gray /><Tool n="del" t="删除" gray />
        <Tool n="ruler" t="缩尺配筋" /><Tool n="info" t="钢筋信息" /><Tool n="lib" t="钢筋图库" />
        <Tool n="other" t="其他" caret gapCls="mr-[5px]" />
        <span className="mr-[8px]">关闭</span>
        <span className="w-px h-[18px] bg-[#b8b8b8] mr-[6px]" />
        <span>单构件钢筋总重(kg) : 30.597</span>
      </Group>
    </div>
  );
}

const heads = ["", "筋号", "直径(mm)", "级别", "图号", "图形", "计算公式", "公式描述", "长度(mm)", "根数", "搭接", "损耗(%)", "单重(kg)", "总重(kg)"];
const rows = [
  { h: "h-[29px]", c: ["全部纵筋.1", "12", "⏀", "1", "", "4000", "柱净高", "4000", "4", "0", "0", "3.552", "14.208"] },
  { h: "h-[29px]", c: ["构造柱植筋.\n1", "12", "⏀", "1", "", "59*d+10*d", "搭接+植筋锚固深度", "828", "8", "0", "0", "0.735", "5.882"] },
  { h: "h-[34px]", c: ["箍筋.1", "8", "⏀", "195", "", "2*((240-2*25)+(240-2*25))+\n2*(11.9*d)", "", "950", "28", "0", "0", "0.375", "10.507"] },
];
const colCls = "grid grid-cols-[35px_72px_57px_35px_34px_201px_166px_156px_61px_169px_38px_50px_61px_50px]";

function Grade() {
  return (
    <svg viewBox="0 0 12 12" className="w-[11px] h-[11px] mx-auto" aria-hidden="true">
      <path d="M2.500 2.500h7v4.500h-7zM6 0v12M1.500 11h9" fill="none" stroke="#111" strokeWidth="1" />
    </svg>
  );
}

function Shape({ i }: { i: number }) {
  if (i === 2) {
    return (
      <div className="w-full h-full flex items-center text-[12px] pl-[54px]">
        <span className="mr-[7px] font-['Liberation_Sans',sans-serif]">190</span>
        <span className="w-[34px] h-[23px] border-2 border-black flex items-end relative font-['Liberation_Sans',sans-serif] text-[#e00000] leading-none pb-[2px]">
          190
          <svg viewBox="0 0 10 10" className="absolute right-0 top-0 w-[10px] h-[10px]"><path d="M1 9l7-7" stroke="#000" strokeWidth="2" /></svg>
        </span>
      </div>
    );
  }
  return (
    <div className="w-full h-full flex flex-col items-center justify-center pr-[2px]">
      <span className="leading-[13px] text-[#e00000]"><Sim t={i === 0 ? "4000" : "828"} /></span>
      <span className="w-[150px] h-[2px] bg-black mt-[1px]" />
    </div>
  );
}

function SteelTable() {
  return (
    <div className="grow min-h-0 flex bg-[#f0f0f0] text-[12px] text-[#111] relative">
      <div className="w-[12px] shrink-0 bg-[radial-gradient(#bbb_1px,transparent_1px)] bg-[length:4px_5px]" />
      <div className="grow min-w-0 overflow-hidden flex flex-col">
        <div className={`${colCls} h-[19px] shrink-0`}>
          {heads.map((h, i) => (
            <div key={i} className={`flex items-center justify-center border-r border-b border-[#bbb] whitespace-nowrap overflow-hidden ${i === 9 ? "bg-[#e8bc70] text-[#4b0082]" : "bg-[#f0f0f0]"}`}><Sim t={h} /></div>
          ))}
        </div>
        {rows.map((r, ri) => (
          <div key={ri} className={`${colCls} ${r.h} shrink-0`}>
            <div className={`flex items-center justify-center border-r border-b border-[#bbb] ${ri === 0 ? "bg-[#ffd28c] text-[#4b0082]" : "bg-[#f4f4f4]"}`}><Sim t={ri === 0 ? "1*" : String(ri + 1)} /></div>
            {r.c.map((c, ci) => (
              <div key={ci} className={`flex items-center border-b border-[#bbb] pl-[2px] leading-[13px] overflow-hidden ${ci === 0 ? "border-r border-r-black" : "border-r"} ${ri === 0 && ci === 8 ? "bg-[#aeead8]" : "bg-[#ccffd6]"}`}>
                {ci === 4 ? <Shape i={ri} /> : c === "⏀" ? <Grade /> : (
                  <span className="flex flex-col">
                    {c.split("\n").map((line) => <span key={line}><Sim t={line} /></span>)}
                  </span>
                )}
              </div>
            ))}
          </div>
        ))}
        <div className={`${colCls} h-[19px] shrink-0 bg-white`}>
          {heads.map((_, i) => (
            <div key={i} className={`flex items-center justify-center border-b border-[#bbb] ${i === 1 ? "border-r border-r-black" : "border-r"} ${i === 0 ? "bg-[#f4f4f4]" : ""}`}>{i === 0 && <Sim t="4" />}</div>
          ))}
        </div>
        <div className="h-[16px] mt-[4px] flex items-center bg-[#f0f0f0] shrink-0">
          <span className="w-[19px] flex justify-center"><span className="w-[6px] h-[6px] border-l-2 border-b-2 border-[#666] rotate-45" /></span>
          <span className="w-[697px] h-full bg-[#c8c8c8]" />
          <span className="ml-auto mr-[7px] w-[6px] h-[6px] border-r-2 border-t-2 border-[#666] rotate-45" />
        </div>
      </div>
      <svg viewBox="0 0 180 48" className="absolute left-[586px] top-[44px] w-[180px] h-[48px] pointer-events-none">
        <ellipse cx="89" cy="23" rx="85" ry="20" fill="none" stroke="#f00000" strokeWidth="3" />
      </svg>
    </div>
  );
}

const props: { n: string; t: string; v?: string; cls?: string; sub?: boolean; box?: boolean; sel?: boolean }[] = [
  { n: "9", t: "H边一侧中部筋", cls: "text-[#888]" },
  { n: "10", t: "箍筋", v: "⏀8@150", cls: "text-[#0000ee]" },
  { n: "11", t: "肢数", v: "2*2", cls: "text-[#0000ee]" },
  { n: "12", t: "其它箍筋", cls: "text-[#0000ee]" },
  { n: "13", t: "备注" },
  { n: "14", t: "其它属性", box: true, cls: "text-[#888]" },
  { n: "15", t: "汇总信息", v: "构造柱", sub: true },
  { n: "16", t: "保护层厚度(mm)", v: "(25)", sub: true },
  { n: "17", t: "上加密范围(mm)", sub: true },
  { n: "18", t: "下加密范围(mm)", sub: true },
  { n: "19", t: "插筋构造", v: "设置插筋", sub: true },
  { n: "20", t: "插筋信息", sub: true },
  { n: "21", t: "计算设置", v: "按默认计算设置计算", sub: true, sel: true },
  { n: "22", t: "节点设置", v: "按默认节点设置计算", sub: true },
  { n: "23", t: "搭接设置", v: "按默认搭接设置计算", sub: true },
  { n: "24", t: "顶标高(m)", v: "层顶标高(4.45)", sub: true },
];

function PropRow({ p }: { p: (typeof props)[number] }) {
  return (
    <div className="flex h-[19px] shrink-0 border-b border-[#bbb]">
      <div className={`w-[21px] border-r border-[#bbb] flex items-center justify-center ${p.sel ? "bg-[#ffd28c] text-[#7a0080]" : "bg-[#f0f0f0]"}`}><Sim t={p.n} /></div>
      <div className={`w-[120px] border-r border-[#bbb] flex items-center relative whitespace-nowrap ${p.sel ? "bg-[#0078d7] text-white" : p.cls ?? ""} ${p.sub ? "pl-[30px]" : "pl-[20px]"}`}>
        {p.sub && <span className={`absolute left-[8px] top-0 h-full border-l ${p.sel ? "border-white" : "border-[#bbb]"}`} />}
        {p.sub && <span className={`absolute left-[9px] top-[9px] w-[16px] border-t ${p.sel ? "border-white" : "border-[#bbb]"}`} />}
        {p.box && <span className="absolute left-[3px] top-[3px] w-[12px] h-[12px] border border-[#aaa] flex items-center justify-center"><span className="w-[7px] h-px bg-[#333]" /></span>}
        <Sim t={p.t} />
      </div>
      <div className={`w-[117px] flex items-center pl-[2px] whitespace-nowrap overflow-hidden ${p.sel ? "bg-[#cfe4f7]" : ""}`}>
        {p.v?.startsWith("⏀") ? <><span className="w-3 mr-[1px]"><Grade /></span><Sim t={p.v.slice(1)} /></> : p.v ? <Sim t={p.v} /> : null}
      </div>
    </div>
  );
}

function PropDialog() {
  return (
    <div className="absolute left-[1004px] top-[60px] w-[281px] h-[495px] bg-white border-t-2 border-[#0078d7] shadow-[0_0_6px_rgba(0,0,0,0.35)] flex flex-col text-[12px] text-[#111]">
      <div className="h-[31px] flex items-center justify-between pl-[8px] pr-px shrink-0 border-b-2 border-[#bbb]">
        <span className="text-[#222]">属性编辑器</span>
        <span className="w-[19px] h-[19px] bg-[#c75050] text-white text-[11px] font-bold flex items-center justify-center leading-none">x</span>
      </div>
      <div className="h-[331px] flex pl-px shrink-0 overflow-hidden bg-white">
        <div className="w-[259px] shrink-0 overflow-hidden">
          <div className="flex h-[24px] border-b border-[#bbb] text-[13px]">
            <div className="w-[21px] border-r border-[#bbb] bg-[#f0f0f0]" />
            <div className="w-[120px] border-r border-[#bbb] bg-[#f4f4f4] flex items-center justify-center">属性名称</div>
            <div className="w-[117px] bg-gradient-to-b from-[#fad79a] to-[#f0bc64] text-[#5a0080] flex items-center justify-center">属性值</div>
          </div>
          {props.map((p) => <PropRow key={p.n} p={p} />)}
          <div className="flex h-[6px]">
            <div className="w-[21px] border-r border-[#bbb] bg-[#f0f0f0]" /><div className="w-[120px] border-r border-[#bbb]" />
          </div>
        </div>
        <div className="w-[16px] ml-[3px] bg-[#f0f0f0] flex flex-col items-center mb-[1px]">
          <span className="h-[24px] flex items-center"><span className="w-[6px] h-[6px] border-l-2 border-t-2 border-[#555] rotate-45 mt-[3px]" /></span>
          <span className="w-full h-[97px] mt-[137px] bg-[#c8c8c8]" />
          <span className="mt-auto h-[17px] flex items-center"><span className="w-[6px] h-[6px] border-r-2 border-b-2 border-[#555] rotate-45 mb-[3px]" /></span>
        </div>
      </div>
      <svg viewBox="1005 428 279 126" className="w-[279px] h-[126px] bg-black mt-[4px] ml-px shrink-0 block">
        <rect x="1094.500" y="440.500" width="90" height="90" fill="none" stroke="#fff" />
        <rect x="1096.500" y="442.500" width="86" height="85" fill="none" stroke="#00ffff" strokeWidth="2.500" />
        <path d="M1141.500 434v110M1087 489.500h110" stroke="#fff" strokeDasharray="8 3" />
        <path d="M1188 440.500h10M1188 489.500h10M1188 530.500h10M1194.500 440v91M1094.500 536v9M1184.500 536v9M1094 540.500h91" stroke="#fff" />
        <text transform="translate(1198 464) rotate(-90)" textAnchor="middle" fontSize="9" fill="#ffffa0" stroke="#000" strokeWidth="3" paintOrder="stroke">120</text>
        <text transform="translate(1198 508) rotate(-90)" textAnchor="middle" fontSize="9" fill="#ffffa0" stroke="#000" strokeWidth="3" paintOrder="stroke">120</text>
        <text x="1119" y="544" textAnchor="middle" fontSize="9" fill="#ffffa0" stroke="#000" strokeWidth="3" paintOrder="stroke">120</text>
        <text x="1164" y="544" textAnchor="middle" fontSize="9" fill="#ffffa0" stroke="#000" strokeWidth="3" paintOrder="stroke">120</text>
      </svg>
    </div>
  );
}

function StatusBar() {
  const cell = "h-[20px] border border-[#ddd] bg-[#f7f7f7] flex items-center pl-[1px] whitespace-nowrap shrink-0";
  return (
    <div className="h-[23px] bg-[#f0f0f0] border-t-2 border-[#bbb] flex items-center gap-[2px] text-[12px] text-[#111] shrink-0 pt-px">
      <div className={`${cell} w-[147px]`}><Sim t="X=3939 Y=13451" /></div>
      <div className={`${cell} w-[77px]`}><Sim t="层高:4.5m" /></div>
      <div className={`${cell} w-[99px]`}><Sim t="底标高:-0.05m" /></div>
      <div className={`${cell} w-[47px]`}><Sim t="1(1)" /></div>
      <div className={`${cell} w-[916px]`}>在此设置构造柱的计算规则</div>
      <div className={`${cell} grow shrink`}><Sim t="517.2 FPS" /></div>
    </div>
  );
}

function ImeBar() {
  return (
    <div className="absolute left-[702px] top-[4px] flex items-center h-[23px]">
      <div className="w-[23px] h-[24px] rounded-[5px] bg-[#ee5a24] -rotate-6 z-10 flex items-center justify-center text-white text-[19px] font-bold leading-none font-['Liberation_Sans',sans-serif]">S</div>
      <div className="ml-[-3px] pl-[12px] w-[185px] h-[23px] bg-white border border-[#bcd4ec] flex items-center text-[#2c7cc8] text-[14px] font-bold">
        <span className="mr-[9px]">中</span>
        <span className="mr-[7px] w-[12px] leading-none">°,</span>
        <svg viewBox="0 0 16 16" className="w-4 h-4 mr-[7px]" fill="none" stroke="#2c7cc8" strokeWidth="1.500"><circle cx="8" cy="8" r="7" /><path d="M5 6v1M11 6v1M5 10c1 2 5 2 6 0" /></svg>
        <svg viewBox="0 0 16 16" className="w-4 h-4 mr-[6px]" fill="#2c7cc8"><rect x="5" y="1" width="6" height="9" rx="3" /><path d="M3 8c0 6 10 6 10 0M8 12v3" fill="none" stroke="#2c7cc8" strokeWidth="1.500" /></svg>
        <svg viewBox="0 0 16 16" className="w-4 h-4 mr-[8px]"><rect y="2" width="16" height="12" rx="2" fill="#2c7cc8" /><path d="M2 5h12M2 8h12M4 11h8" stroke="#fff" strokeDasharray="1.500 1" /></svg>
        <svg viewBox="0 0 16 16" className="w-4 h-4 mr-[4px]"><circle cx="6" cy="4" r="3" fill="#b8c4d0" /><path d="M1 13c0-6 10-6 10 0z" fill="#b8c4d0" /><rect x="8" y="8" width="8" height="6" fill="#fff" stroke="#9aa8b8" /></svg>
        <svg viewBox="0 0 16 16" className="w-4 h-4 mr-[6px]" fill="#2c7cc8"><path d="M1 3l4-2h6l4 2-2 4-1-1v9H4V6L3 7z" /></svg>
        <svg viewBox="0 0 16 16" className="w-4 h-4" fill="#2c7cc8"><path d="M2 14l7-7a4 4 0 0 1 5-5l-3 3 1 2 2 0 1-2a4 4 0 0 1-6 5l-5 6z" /></svg>
      </div>
    </div>
  );
}

function Badge() {
  return (
    <div className="absolute left-[1036px] top-[-40px] w-[56px] h-[60px] rounded-full bg-[#35b04c] border-[3px] border-[#7d8a80] flex items-end justify-center pb-0 text-white text-[12px] font-bold leading-[16px] shadow-[0_1px_3px_rgba(0,0,0,0.4)]">71</div>
  );
}

function Tile({ w, children, active }: { w: string; children: ReactNode; active?: boolean }) {
  return <div className={`h-full flex items-center justify-center shrink-0 relative ${w} ${active ? "bg-[#2e3438]" : ""}`}>{children}</div>;
}

function Running({ w }: { w: string }) {
  return <span className={`absolute bottom-0 h-[2px] bg-[#76b9ed] ${w}`} />;
}

function TaskBar() {
  return (
    <div className="h-[40px] bg-[#0a1014] flex items-center text-white shrink-0">
      <div className="w-[48px] h-full bg-black flex items-center justify-center shrink-0">
        <svg viewBox="0 0 16 16" className="w-4 h-4" fill="#fff"><path d="M0 2.500l6.500-1v6H0zM7.500 1.300L16 0v7.500H7.500zM0 8.500h6.500v6l-6.500-1zM7.500 8.500H16V16l-8.500-1.300z" /></svg>
      </div>
      <div className="w-[344px] h-full bg-[#333] flex items-center shrink-0 pl-[10px]">
        <span className="w-[19px] h-[19px] rounded-full border-[3px] border-[#ddd] mr-[6px]" />
        <span className="text-[14px] text-[#9a9a9a]">在这里输入你要搜索的内容</span>
        <svg viewBox="0 0 16 16" className="w-4 h-4 ml-auto mr-[12px]" fill="none" stroke="#999"><rect x="5.500" y="1" width="5" height="9" rx="2.500" /><path d="M3 8c0 5 10 5 10 0M8 12v3M5 15h6" /></svg>
      </div>
      <Tile w="w-[49px]"><svg viewBox="0 0 20 16" className="w-5 h-4" fill="none" stroke="#fff"><path d="M5.500 1.500h9v13h-9zM3 3.500H.5v9H3M17 3.500h2.500v9H17" /></svg></Tile>
      <Tile w="w-[51px]"><svg viewBox="0 0 22 22" className="w-[22px] h-[22px]" fill="#e8e8e8"><path d="M10 10C3 10 0 7 1 3s8-3 9 2zM12 10c0-7 3-10 7-9s3 8-2 9zM12 12c7 0 10 3 9 7s-8 3-9-2zM10 12c0 7-3 10-7 9s-3-8 2-9z" /></svg></Tile>
      <Tile w="w-[51px]"><span className="text-[26px] leading-none text-[#e8e8e8] font-['Liberation_Sans',sans-serif] font-bold">e</span><svg viewBox="0 0 24 24" className="absolute left-[13px] top-[8px] w-6 h-6" fill="none" stroke="#e8e8e8" strokeWidth="1.300"><ellipse cx="12" cy="12" rx="11" ry="4" transform="rotate(-35 12 12)" /></svg></Tile>
      <Tile w="w-[49px]"><svg viewBox="0 0 20 20" className="w-5 h-5" fill="none" stroke="#c8c8c8" strokeWidth="1.500"><path d="M15 4C9 0 2 4 3 11c1 6 9 8 12 3 2-4-2-8-6-6-3 2-2 6 1 6" /></svg></Tile>
      <Tile w="w-[48px]"><span className="text-[28px] leading-none text-[#0a78d7] font-['Liberation_Sans',sans-serif] font-bold">e</span></Tile>
      <Tile w="w-[42px]"><span className="text-[28px] leading-none text-[#3ca4e8] font-['Liberation_Sans',sans-serif] font-bold">e</span><svg viewBox="0 0 24 24" className="absolute left-[9px] top-[8px] w-6 h-6" fill="none" stroke="#f0c828" strokeWidth="1.600"><ellipse cx="12" cy="12" rx="11" ry="4" transform="rotate(-35 12 12)" /></svg></Tile>
      <Tile w="w-[42px]"><svg viewBox="0 0 24 24" className="w-6 h-6"><path d="M1 4h9l2 2h11v15H1z" fill="#f6d265" /><path d="M8 15h8v6H8z" fill="#3aa0e8" /></svg><Running w="w-[33px] left-[5px]" /></Tile>
      <Tile w="w-[43px]"><span className="text-[26px] leading-none text-[#1a88e8] font-['Liberation_Sans',sans-serif] font-bold">G</span><Running w="w-[34px] left-[4px]" /></Tile>
      <Tile w="w-[43px]"><svg viewBox="0 0 24 24" className="w-6 h-6"><circle cx="12" cy="12" r="10" fill="#8ccc50" stroke="#e8f0e0" strokeWidth="2" /><path d="M6 10h12M6 14h12" stroke="#fff" strokeWidth="2" /></svg><Running w="w-[34px] left-[4px]" /></Tile>
      <Tile w="w-[42px]" active><svg viewBox="0 0 24 24" className="w-[24px] h-[24px]"><rect width="24" height="24" rx="4" fill="#0f8fe8" /><path d="M12 5v14M5 12c0-4 6-4 7 0s7 4 7 0" fill="none" stroke="#fff" strokeWidth="2.400" /></svg><Running w="w-full left-0" /></Tile>
      <Tile w="w-[42px]"><svg viewBox="0 0 24 24" className="w-6 h-6"><rect x="1" y="1" width="22" height="22" rx="2" fill="#f0a830" /><path d="M6 5h11v15H6z" fill="#fff3d8" /><path d="M8 9h7M8 12h7M8 15h5" stroke="#a07030" /></svg><Running w="w-[33px] left-[4px]" /></Tile>
      <Tile w="w-[42px]"><svg viewBox="0 0 24 24" className="w-6 h-6"><rect x="1" y="1" width="22" height="22" rx="3" fill="#0f6cc0" /><path d="M4 7h8v12H4zM12 7h8v12h-8z" fill="#f6e4b8" /><circle cx="15" cy="8" r="3" fill="#cfe8f8" stroke="#888" /></svg><Running w="w-[33px] left-[4px]" /></Tile>
      <div className="w-[50px] text-center text-[12px] text-[#ddd] shrink-0">链接</div>
      <div className="w-[60px] text-center text-[12px] leading-[17px] text-[#e8384f] shrink-0">86%<br />CPU使用</div>
      <div className="flex items-center h-full ml-[12px]">
        <svg viewBox="0 0 14 8" className="w-[14px] h-2 mr-[10px]" fill="none" stroke="#fff" strokeWidth="1.300"><path d="M1 7l6-6 6 6" /></svg>
        <svg viewBox="0 0 16 16" className="w-4 h-4 mr-[9px]"><rect x="3" y="5" width="12" height="8" fill="none" stroke="#fff" /><path d="M5 6.500h7v5H5z" fill="#eee" /><path d="M3 1v4" stroke="#fff" strokeWidth="2" /></svg>
        <svg viewBox="0 0 16 16" className="w-4 h-4 mr-[5px]" fill="none" stroke="#bbb"><path d="M1 14C1 8 8 2 15 2M4 14c0-4 5-9 11-9M7 14c0-2 3-6 8-6" /></svg>
        <svg viewBox="0 0 16 16" className="w-4 h-4 mr-[12px]" fill="none" stroke="#fff"><path d="M1 6h3l4-4v12l-4-4H1zM11 5c1 2 1 4 0 6M13 3c2 3 2 7 0 10" /></svg>
        <svg viewBox="0 0 24 16" className="w-[24px] h-4 mr-[12px]" fill="none" stroke="#fff"><rect x=".5" y="1.500" width="23" height="13" /><path d="M3 5h18M3 8h18M6 11h12" strokeDasharray="1.500 1" /></svg>
        <span className="text-[14px] w-[18px] mr-[10px]">中</span>
        <span className="w-[16px] h-[18px] rounded-[3px] bg-[#ee4a20] text-white text-[14px] font-bold flex items-center justify-center -rotate-6 font-['Liberation_Sans',sans-serif]">S</span>
      </div>
      <div className="w-[74px] ml-[18px] text-center text-[12px] leading-[19px] text-[#e8e8e8] shrink-0">15:34<br />2018/4/26</div>
      <div className="ml-[11px] w-[24px] h-[24px] relative shrink-0">
        <svg viewBox="0 0 16 16" className="w-[16px] h-[16px] absolute left-[1px] top-[1px]"><path d="M1 1h14v10H7l-3 3v-3H1z" fill="#fff" /><path d="M3 4h10M3 6.500h10M3 9h7" stroke="#333" /></svg>
        <span className="absolute left-[8px] top-[8px] w-[16px] h-[16px] rounded-full bg-[#444] border border-[#ddd] text-[11px] font-bold flex items-center justify-center leading-none">1</span>
      </div>
    </div>
  );
}

export default function App() {
  return (
    <div className="w-[1366px] h-[768px] overflow-hidden relative flex flex-col bg-[#f0f0f0] font-['Noto_Sans_CJK_SC','Noto_Sans',sans-serif]">
      <TitleBar />
      <MenuBar />
      <Row1 />
      <div className="flex grow min-h-0">
        <LeftPanel />
        <main className="grow min-w-0 flex flex-col overflow-hidden">
          <Row2 />
          <Row3 />
          <Row4 />
          <Canvas />
          <SnapBar />
          <SteelBar />
          <SteelTable />
        </main>
      </div>
      <StatusBar />
      <TaskBar />
      <PropDialog />
      <ImeBar />
      <Badge />
    </div>
  );
}
